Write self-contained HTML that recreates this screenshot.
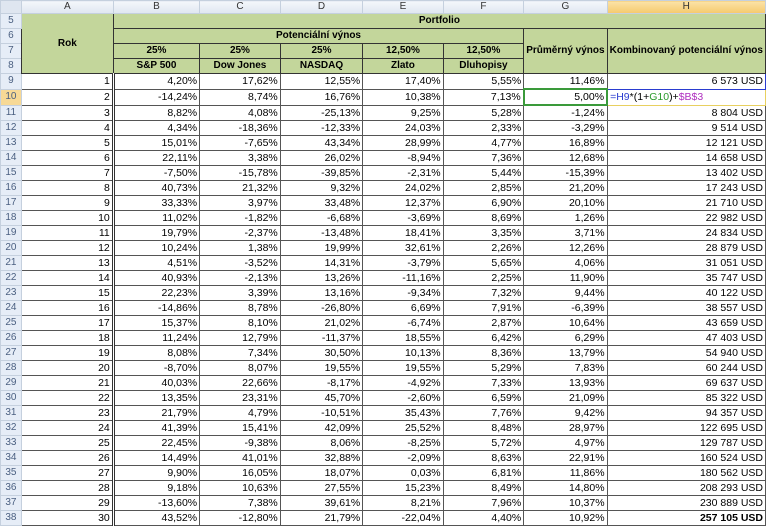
<!DOCTYPE html>
<html><head><meta charset="utf-8"><style>
body{margin:0;background:#fff;width:766px;height:525px;overflow:hidden;font-family:"Liberation Sans",sans-serif;font-size:10.5px;}
table{border-collapse:collapse;table-layout:fixed;position:absolute;left:0;top:0;}
td{height:14px;padding:0 2px;border:1px solid #555;white-space:nowrap;overflow:hidden;text-align:right;line-height:14px;color:#000}
tr.ch td{height:12px;line-height:12px;background:linear-gradient(#f4f7fb,#dfe6f0);border:1px solid #c5d0de;color:#333;text-align:center;font-size:10px}
td.rh{background:#e6edf7;border:1px solid #c5d0de;color:#4a5f80;text-align:center;font-size:10px;padding:0}
td.rh.act{background:#f7d996}
tr.ch td.act{background:linear-gradient(#fbe3a8,#f5c96c)}
td.g{background:#c3d69b;text-align:center;font-weight:bold;font-size:10px;border:1px solid #333}
.ab{border-right:3px double #333}
</style></head><body>
<table>
<colgroup><col style="width:21px"><col style="width:93px"><col style="width:87px"><col style="width:81px"><col style="width:83px"><col style="width:81px"><col style="width:81px"><col style="width:80px"><col style="width:154px"></colgroup>
<tr class="ch"><td style="background:#dfe6f0"></td><td>A</td><td>B</td><td>C</td><td>D</td><td>E</td><td>F</td><td>G</td><td class="act">H</td></tr>
<tr><td class="rh">5</td><td class="g ab" rowspan="4">Rok</td><td class="g" colspan="7">Portfolio</td></tr>
<tr><td class="rh">6</td><td class="g" colspan="5">Potenciální výnos</td><td class="g" rowspan="3">Průměrný výnos</td><td class="g" rowspan="3">Kombinovaný potenciální výnos</td></tr>
<tr><td class="rh">7</td><td class="g">25%</td><td class="g">25%</td><td class="g">25%</td><td class="g">12,50%</td><td class="g">12,50%</td></tr>
<tr><td class="rh">8</td><td class="g">S&amp;P 500</td><td class="g">Dow Jones</td><td class="g">NASDAQ</td><td class="g">Zlato</td><td class="g">Dluhopisy</td></tr>
<tr><td class="rh">9</td><td class="ab">1</td><td>4,20%</td><td>17,62%</td><td>12,55%</td><td>17,40%</td><td>5,55%</td><td>11,46%</td><td style="border:1px solid #2a3cd0">6 573 USD</td></tr>
<tr><td class="rh act">10</td><td class="ab">2</td><td>-14,24%</td><td>8,74%</td><td>16,76%</td><td>10,38%</td><td>7,13%</td><td style="border:2px solid #3a9a3a">5,00%</td><td style="text-align:left;border:1px solid #e8d060"><span style="color:#2a3cd0">=H9</span>*(1+<span style="color:#2a9a2a">G10</span>)+<span style="color:#b030c0">$B$3</span></td></tr>
<tr><td class="rh">11</td><td class="ab">3</td><td>8,82%</td><td>4,08%</td><td>-25,13%</td><td>9,25%</td><td>5,28%</td><td>-1,24%</td><td>8 804 USD</td></tr>
<tr><td class="rh">12</td><td class="ab">4</td><td>4,34%</td><td>-18,36%</td><td>-12,33%</td><td>24,03%</td><td>2,33%</td><td>-3,29%</td><td>9 514 USD</td></tr>
<tr><td class="rh">13</td><td class="ab">5</td><td>15,01%</td><td>-7,65%</td><td>43,34%</td><td>28,99%</td><td>4,77%</td><td>16,89%</td><td>12 121 USD</td></tr>
<tr><td class="rh">14</td><td class="ab">6</td><td>22,11%</td><td>3,38%</td><td>26,02%</td><td>-8,94%</td><td>7,36%</td><td>12,68%</td><td>14 658 USD</td></tr>
<tr><td class="rh">15</td><td class="ab">7</td><td>-7,50%</td><td>-15,78%</td><td>-39,85%</td><td>-2,31%</td><td>5,44%</td><td>-15,39%</td><td>13 402 USD</td></tr>
<tr><td class="rh">16</td><td class="ab">8</td><td>40,73%</td><td>21,32%</td><td>9,32%</td><td>24,02%</td><td>2,85%</td><td>21,20%</td><td>17 243 USD</td></tr>
<tr><td class="rh">17</td><td class="ab">9</td><td>33,33%</td><td>3,97%</td><td>33,48%</td><td>12,37%</td><td>6,90%</td><td>20,10%</td><td>21 710 USD</td></tr>
<tr><td class="rh">18</td><td class="ab">10</td><td>11,02%</td><td>-1,82%</td><td>-6,68%</td><td>-3,69%</td><td>8,69%</td><td>1,26%</td><td>22 982 USD</td></tr>
<tr><td class="rh">19</td><td class="ab">11</td><td>19,79%</td><td>-2,37%</td><td>-13,48%</td><td>18,41%</td><td>3,35%</td><td>3,71%</td><td>24 834 USD</td></tr>
<tr><td class="rh">20</td><td class="ab">12</td><td>10,24%</td><td>1,38%</td><td>19,99%</td><td>32,61%</td><td>2,26%</td><td>12,26%</td><td>28 879 USD</td></tr>
<tr><td class="rh">21</td><td class="ab">13</td><td>4,51%</td><td>-3,52%</td><td>14,31%</td><td>-3,79%</td><td>5,65%</td><td>4,06%</td><td>31 051 USD</td></tr>
<tr><td class="rh">22</td><td class="ab">14</td><td>40,93%</td><td>-2,13%</td><td>13,26%</td><td>-11,16%</td><td>2,25%</td><td>11,90%</td><td>35 747 USD</td></tr>
<tr><td class="rh">23</td><td class="ab">15</td><td>22,23%</td><td>3,39%</td><td>13,16%</td><td>-9,34%</td><td>7,32%</td><td>9,44%</td><td>40 122 USD</td></tr>
<tr><td class="rh">24</td><td class="ab">16</td><td>-14,86%</td><td>8,78%</td><td>-26,80%</td><td>6,69%</td><td>7,91%</td><td>-6,39%</td><td>38 557 USD</td></tr>
<tr><td class="rh">25</td><td class="ab">17</td><td>15,37%</td><td>8,10%</td><td>21,02%</td><td>-6,74%</td><td>2,87%</td><td>10,64%</td><td>43 659 USD</td></tr>
<tr><td class="rh">26</td><td class="ab">18</td><td>11,24%</td><td>12,79%</td><td>-11,37%</td><td>18,55%</td><td>6,42%</td><td>6,29%</td><td>47 403 USD</td></tr>
<tr><td class="rh">27</td><td class="ab">19</td><td>8,08%</td><td>7,34%</td><td>30,50%</td><td>10,13%</td><td>8,36%</td><td>13,79%</td><td>54 940 USD</td></tr>
<tr><td class="rh">28</td><td class="ab">20</td><td>-8,70%</td><td>8,07%</td><td>19,55%</td><td>19,55%</td><td>5,29%</td><td>7,83%</td><td>60 244 USD</td></tr>
<tr><td class="rh">29</td><td class="ab">21</td><td>40,03%</td><td>22,66%</td><td>-8,17%</td><td>-4,92%</td><td>7,33%</td><td>13,93%</td><td>69 637 USD</td></tr>
<tr><td class="rh">30</td><td class="ab">22</td><td>13,35%</td><td>23,31%</td><td>45,70%</td><td>-2,60%</td><td>6,59%</td><td>21,09%</td><td>85 322 USD</td></tr>
<tr><td class="rh">31</td><td class="ab">23</td><td>21,79%</td><td>4,79%</td><td>-10,51%</td><td>35,43%</td><td>7,76%</td><td>9,42%</td><td>94 357 USD</td></tr>
<tr><td class="rh">32</td><td class="ab">24</td><td>41,39%</td><td>15,41%</td><td>42,09%</td><td>25,52%</td><td>8,48%</td><td>28,97%</td><td>122 695 USD</td></tr>
<tr><td class="rh">33</td><td class="ab">25</td><td>22,45%</td><td>-9,38%</td><td>8,06%</td><td>-8,25%</td><td>5,72%</td><td>4,97%</td><td>129 787 USD</td></tr>
<tr><td class="rh">34</td><td class="ab">26</td><td>14,49%</td><td>41,01%</td><td>32,88%</td><td>-2,09%</td><td>8,63%</td><td>22,91%</td><td>160 524 USD</td></tr>
<tr><td class="rh">35</td><td class="ab">27</td><td>9,90%</td><td>16,05%</td><td>18,07%</td><td>0,03%</td><td>6,81%</td><td>11,86%</td><td>180 562 USD</td></tr>
<tr><td class="rh">36</td><td class="ab">28</td><td>9,18%</td><td>10,63%</td><td>27,55%</td><td>15,23%</td><td>8,49%</td><td>14,80%</td><td>208 293 USD</td></tr>
<tr><td class="rh">37</td><td class="ab">29</td><td>-13,60%</td><td>7,38%</td><td>39,61%</td><td>8,21%</td><td>7,96%</td><td>10,37%</td><td>230 889 USD</td></tr>
<tr><td class="rh">38</td><td class="ab">30</td><td>43,52%</td><td>-12,80%</td><td>21,79%</td><td>-22,04%</td><td>4,40%</td><td>10,92%</td><td><b>257 105 USD</b></td></tr>
</table>
</body></html>
